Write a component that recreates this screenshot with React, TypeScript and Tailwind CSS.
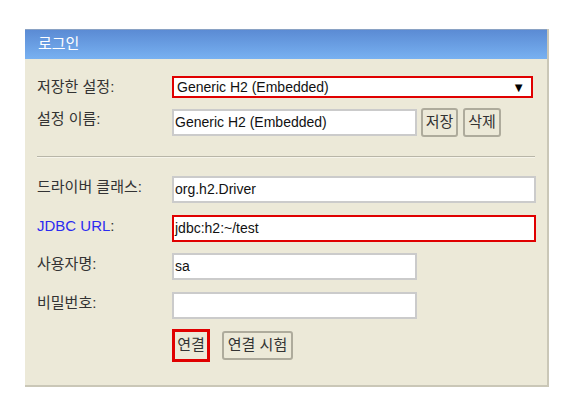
export default function App() {
  const font = { fontFamily: '"Liberation Sans", "Noto Sans CJK KR", sans-serif' }
  return (
    <div className="min-h-[407px] bg-white pl-[25px] pt-[29px]" style={font}>
      <div className="w-[524px] border-r-2 border-b-2 border-[#cac7b7] bg-[#ece9d8]">
        {/* Header */}
        <div className="h-[30px] border-t border-[#8aa2c4] bg-gradient-to-b from-[#5b8bd4] to-[#78b1f1] pl-[13px] text-[15px] leading-[28px] text-white">
          로그인
        </div>

        <div className="pl-[12px] pr-[11px] pt-[17px] pb-[23px] text-[15px] text-[#333]">
          {/* Saved settings */}
          <div className="flex h-[22px] items-center">
            <div className="w-[135px]">저장한 설정:</div>
            <div className="flex h-[22px] w-[361px] items-center justify-between border-2 border-[#e00000] bg-white pl-[3px] pr-[6px] text-[14px] text-[#111]">
              <span>Generic H2 (Embedded)</span>
              <span className="text-[13px] leading-none text-black">▼</span>
            </div>
          </div>

          {/* Setting name */}
          <div className="mt-[10px] flex h-[29px] items-start">
            <div className="w-[135px]">설정 이름:</div>
            <div className="mt-[1px] flex h-[27px] w-[245px] items-center border-2 border-[#cbcbcb] bg-white pl-[1px] text-[14px] text-[#111]">
              Generic H2 (Embedded)
            </div>
            <button className="ml-[4px] h-[29px] w-[37px] rounded-[3px] border-2 border-[#aeab9c] bg-[#ece9d8] text-[15px] text-[#333]">
              저장
            </button>
            <button className="ml-[5px] h-[29px] w-[38px] rounded-[3px] border-2 border-[#aeab9c] bg-[#ece9d8] text-[15px] text-[#333]">
              삭제
            </button>
          </div>

          {/* Separator */}
          <div className="mt-[19px] mr-[1px] border-t border-[#b8b6a8] border-b border-b-[#f6f4ea]" />

          {/* Driver class */}
          <div className="mt-[18px] flex h-[27px] items-start">
            <div className="w-[135px]">드라이버 클래스:</div>
            <div className="flex h-[27px] w-[364px] items-center border-2 border-[#cbcbcb] bg-white pl-[1px] text-[14px] text-[#111]">
              org.h2.Driver
            </div>
          </div>

          {/* JDBC URL */}
          <div className="mt-[12px] flex h-[27px] items-start">
            <div className="w-[135px] text-[#2b2bf0]">
              JDBC URL<span className="text-[#333]">:</span>
            </div>
            <div className="flex h-[27px] w-[364px] items-center border-2 border-[#e00000] bg-white pl-[1px] text-[14px] text-[#111]">
              jdbc:h2:~/test
            </div>
          </div>

          {/* User name */}
          <div className="mt-[11px] flex h-[27px] items-start">
            <div className="w-[135px]">사용자명:</div>
            <div className="flex h-[27px] w-[245px] items-center border-2 border-[#cbcbcb] bg-white pl-[1px] text-[14px] text-[#111]">
              sa
            </div>
          </div>

          {/* Password */}
          <div className="mt-[12px] flex h-[27px] items-start">
            <div className="w-[135px]">비밀번호:</div>
            <div className="h-[27px] w-[245px] border-2 border-[#cbcbcb] bg-white" />
          </div>

          {/* Actions */}
          <div className="mt-[10px] flex items-center pl-[135px]">
            <button className="h-[33px] w-[38px] border-[3px] border-[#e00000] bg-[#ece9d8] text-[15px] text-[#333]">
              연결
            </button>
            <button className="ml-[12px] h-[29px] w-[71px] rounded-[3px] border-2 border-[#aeab9c] bg-[#ece9d8] text-[15px] text-[#333]">
              연결 시험
            </button>
          </div>
        </div>
      </div>
    </div>
  )
}
